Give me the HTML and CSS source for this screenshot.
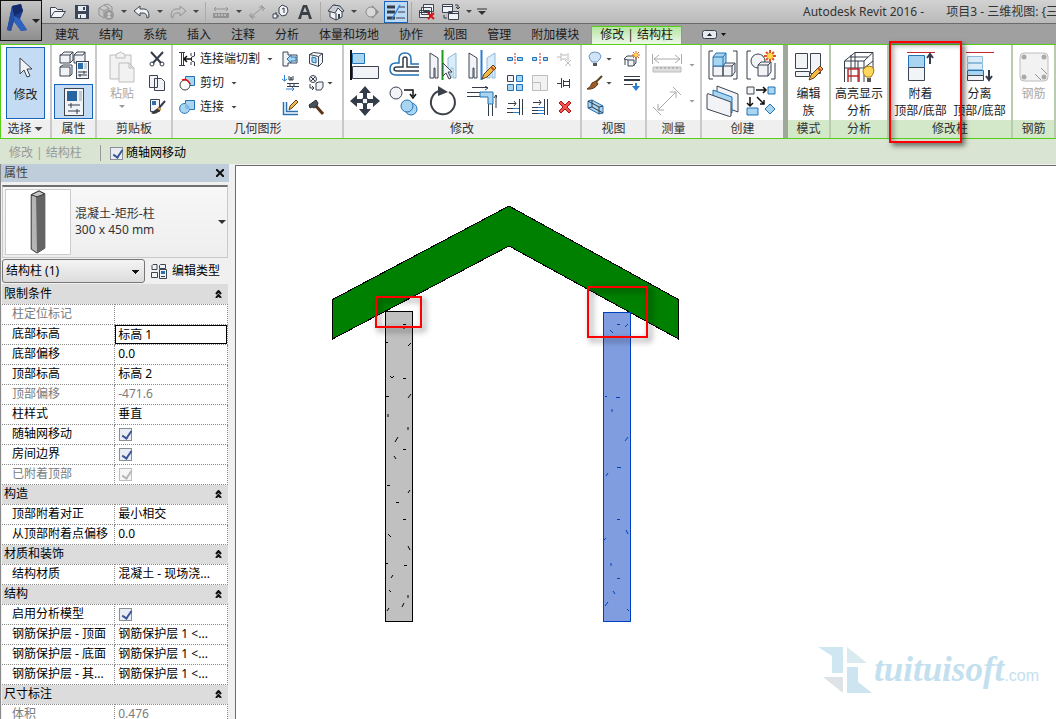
FILE: index.html
```html
<!DOCTYPE html>
<html lang="zh-CN">
<head>
    <meta charset="UTF-8">
    <meta name="viewport" content="width=device-width, initial-scale=1.0">
    <title>Autodesk Revit 2016</title>
    <link rel="stylesheet" href="styles.css">
</head>
<body>
    <header class="top">
        <button class="app-btn" aria-label="应用程序菜单">
            <svg width="40" height="38" viewBox="0 0 40 38">
                <path d="M11 4L20 2L22 9L19 17L26 28L20 29L13 19L10 29L6 28Z" fill="#1d3f8f"/>
                <path d="M11 4L20 2L22 9L13 14Z" fill="#15296b"/>
                <path d="M13 14L19 17L26 28L20 29L13 20Z" fill="#2f62bd"/>
                <path d="M11 4L13 14L10 29L6 28Z" fill="#2850a5"/>
                <path d="M31 17h8l-4 4z" fill="#222"/>
            </svg>
        </button>
        <div class="title-bar">
            <div class="qat">
                <button aria-label="打开"><svg width="18" height="16" viewBox="0 0 18 16"><path class="wh" d="M1.500 13.500V3.500h5l2 2h5v2M1.500 13.500l4-6h11l-4 6z"/></svg></button>
                <button aria-label="保存"><svg width="16" height="16" viewBox="0 0 16 16"><path d="M1 1h13l1 1v13H1z" fill="#3c4657"/><path d="M4 2h8v5H4zM4 10h8v4H4z" fill="#e8edf4"/><path d="M9 3h2v3H9zM6 11h1v3H6z" fill="#3c4657"/></svg></button>
                <button aria-label="同步"><svg width="18" height="18" viewBox="0 0 18 18"><path class="gr" d="M2 5l5-3 5 3v7l-5 3-5-3zM2 5l5 3 5-3M7 8v7M7 2l4-1 4 3v4"/><circle cx="12" cy="12" r="5" fill="#999"/><path d="M12 9v6M10 11h4M10 14h4" stroke="#ddd"/></svg></button>
                <span class="drop"></span>
                <button aria-label="放弃"><svg width="18" height="16" viewBox="0 0 18 16"><path class="wh" d="M1 7l6-5v3h4q5 0 5 8l-2 1q0-5-4-5H7v3z"/></svg></button>
                <span class="drop"></span>
                <button aria-label="重做"><svg width="18" height="16" viewBox="0 0 18 16"><path class="gr" d="M17 7l-6-5v3H7q-5 0-5 8l2 1q0-5 4-5h3v3z"/></svg></button>
                <span class="drop"></span>
                <span class="sep"></span>
                <button aria-label="测量"><svg width="18" height="16" viewBox="0 0 18 16"><path class="gr" d="M2 5h14M4 3L2 5l2 2M14 3l2 2-2 2"/><path d="M1 9h16v5H1z" fill="#939393"/><path d="M4 10v2M7 10v2M10 10v2M13 10v2" stroke="#ddd"/></svg></button>
                <span class="drop"></span>
                <button aria-label="对齐尺寸标注"><svg width="18" height="16" viewBox="0 0 18 16"><path class="gr" d="M3 13L15 3M1 11l4 4M13 1l4 4M3 9v4h4M11 3h4v4"/></svg></button>
                <button aria-label="标记"><svg width="18" height="16" viewBox="0 0 18 16"><path class="dk" d="M7 12H4M4 8v4"/><path class="wh" d="M1 10h4v4H1zM10 1l5 2 1 4-2 4-4 1-3-3V4z"/><path class="dk" d="M10 5l2-1v5"/></svg></button>
                <button aria-label="文字"><svg width="16" height="16" viewBox="0 0 16 16"><path d="M1 15L6 1h4l5 14h-3l-1-4H5l-1 4zM6 8h4L8 3z" fill="#3b3f46"/></svg></button>
                <span class="sep"></span>
                <button aria-label="三维视图"><svg width="18" height="18" viewBox="0 0 18 18"><path class="wh" d="M3 8v6l6 3 6-3V8L12 3 7 2z"/><path d="M1 8l5-6 7 1 4 5-2 1-4-4-3 5z" fill="#c9ced6" stroke="#3c4452"/><path class="dk" d="M9 10v7"/><path d="M11 11h2v4l-2 1z" fill="#3c4452"/></svg></button>
                <span class="drop"></span>
                <button aria-label="剖面"><svg width="16" height="16" viewBox="0 0 16 16"><path d="M8 1v14l7-7z" fill="#8b8b8b"/><circle cx="7" cy="8" r="5" fill="#d8d8d8" stroke="#8b8b8b"/></svg></button>
                <button class="on" aria-label="细线"><svg width="20" height="16" viewBox="0 0 20 16"><path d="M1 3h8M1 8h8M1 14h8" stroke="#343c4a" stroke-width="3"/><path d="M12 3h7M12 8h7M10 14h9" stroke="#343c4a"/><path d="M6 15L14 1" stroke="#2f86dc" stroke-width="1.500"/></svg></button>
                <span class="sep"></span>
                <button aria-label="关闭隐藏窗口"><svg width="18" height="18" viewBox="0 0 18 18"><path class="wh" d="M5.500 1.500h10v7h-10zM3.500 4.500h10v7h-10zM1.500 7.500h10v7h-10z"/><path class="dk" d="M1 9.500h11"/><path d="M10 10l6 6M16 10l-6 6" stroke="#d31616" stroke-width="2"/></svg></button>
                <button aria-label="切换窗口"><svg width="18" height="18" viewBox="0 0 18 18"><path class="wh" d="M.500 1.500h10v8H.500zM6.500 8.500h10v8h-10z"/><path class="dk" d="M1 3.500h10M7 10.500h10M13 2h3v4M14 4l2 2 2-2M2 12v3h3"/></svg></button>
                <span class="drop"></span>
                <button class="qat-more" aria-label="自定义快速访问工具栏"><svg width="10" height="8" viewBox="0 0 10 8"><path d="M0 1h10" stroke="#333"/><path d="M1 3h8l-4 4z" fill="#333"/></svg></button>
            </div>
            <div class="title"><span>Autodesk Revit 2016 -</span><span>项目3 - 三维视图: {三</span></div>
        </div>
        <nav class="tabs">
            <a href="#">建筑</a>
            <a href="#">结构</a>
            <a href="#">系统</a>
            <a href="#">插入</a>
            <a href="#">注释</a>
            <a href="#">分析</a>
            <a href="#">体量和场地</a>
            <a href="#">协作</a>
            <a href="#">视图</a>
            <a href="#">管理</a>
            <a href="#">附加模块</a>
            <a href="#" class="active">修改 | 结构柱</a>
            <button class="minimize" aria-label="最小化功能区">
                <svg width="24" height="10" viewBox="0 0 24 10"><rect x=".5" y=".5" width="14" height="8" rx="2" fill="#e9e9f2" stroke="#39404d"/><path d="M5 6h5L7.500 3z" fill="#222"/><path d="M19 3h5l-2.500 3z" fill="#111"/></svg>
            </button>
        </nav>
    </header>

    <section class="ribbon">
        <div class="panel p-select">
            <div class="panel-body">
                <button class="big on">
                    <svg width="16" height="24" viewBox="0 0 16 24"><path class="wh" d="M2 2v16l4-4 3 7 3-1-3-7h5z"/></svg>
                    <span>修改</span>
                </button>
            </div>
            <div class="panel-name">选择<span class="drop"></span></div>
        </div>

        <div class="panel p-props">
            <div class="panel-body stack">
                <button class="tile" aria-label="类型属性"><svg width="30" height="30" viewBox="0 0 30 30"><path class="wh" d="M2 5l3-3h9v8l-3 3H1V5zM1 5h10v8M11 5l3-3M15 5l3-3h8v9l-3 2h-8zM15 5h9l2-3M1 17l3-2h9v9l-2 2H1zM1 17h10v9"/><rect class="wh" x="17.500" y="11.500" width="12" height="17"/><path d="M19 13h5v6h-5z" fill="#2a6fae"/><path d="M25 13h3v6h-3z" fill="#c8d0d8"/><path class="dk" d="M19 22h9M19 25h9M25 21v3M21 24v3"/></svg></button>
                <button class="tile on" aria-label="属性"><svg width="24" height="30" viewBox="0 0 24 30"><rect class="wh" x="2.500" y="1.500" width="19" height="27"/><path d="M5 4h10v10H5z" fill="#2765a0"/><path d="M17 4h3v10h-3z" fill="#c2cad2"/><path class="dk" d="M6 18h12M6 24h12M9 16v5M15 22v5"/></svg></button>
            </div>
            <div class="panel-name">属性</div>
        </div>

        <div class="panel p-clip">
            <div class="panel-body">
                <button class="big off" disabled>
                    <svg width="30" height="32" viewBox="0 0 30 32"><path class="pale" d="M3 4h21v24H3z"/><path class="pale" d="M9 5q0-3 3-3 1-2 3 0 3 0 3 3v2H9zM12 12h10l5 5v14H12zM22 12v5h5"/></svg>
                    <span>粘贴</span><i class="drop"></i>
                </button>
                <div class="small-col">
                    <button aria-label="剪切"><svg width="16" height="16" viewBox="0 0 16 16"><path d="M2 1l10 11M14 1L4 12" stroke="#343c4a" stroke-width="2"/><circle class="dk" cx="3" cy="13" r="2"/><circle class="dk" cx="13" cy="13" r="2"/></svg></button>
                    <button aria-label="复制"><svg width="16" height="16" viewBox="0 0 16 16"><path class="wh" d="M.500.500h8v12h-8zM5.500 3.500h7l3 3v9h-10z"/></svg></button>
                    <button aria-label="匹配类型"><svg width="18" height="16" viewBox="0 0 18 16"><path class="wh" d="M1.500.500h9v12h-9z"/><path d="M3 2h4v4H3z" fill="#2a6fae"/><path d="M16 2l-6 7" stroke="#343c4a" stroke-width="2"/><path d="M10 8l-8 6q5 3 10-4z" fill="#3b3b3b"/><path d="M9 9l3 2" stroke="#d89a3c" stroke-width="2"/></svg></button>
                </div>
            </div>
            <div class="panel-name">剪贴板</div>
        </div>

        <div class="panel p-geom">
            <div class="panel-body">
                <div class="small-col wide">
                    <button><svg width="16" height="16" viewBox="0 0 16 16"><path class="dk" d="M0 1.500h6M0 14.500h6M2.500 2v12M4.500 2v12M15.500 1v4l-3 1v4l3 1v4M12 2v3M12 11v3"/><path d="M5 8h8M8 5L5 8l3 3" stroke="#111" fill="none" stroke-width="1.500"/></svg>连接端切割<i class="drop"></i></button>
                    <button><svg width="16" height="16" viewBox="0 0 16 16"><path class="bl" d="M6.500 1.500h9v9h-9z"/><circle cx="6" cy="10" r="5" fill="#fff" stroke="#444"/><path d="M3 5q5-2 8 4" fill="none" stroke="#e01010" stroke-width="1.500"/></svg>剪切<i class="drop"></i></button>
                    <button><svg width="16" height="16" viewBox="0 0 16 16"><path class="bl" d="M6.500 1.500h9v9h-5a5 5 0 1 1-4-6z"/><path d="M6 5a5 5 0 0 1 5 5H6.500z" fill="#7dbbe6"/></svg>连接<i class="drop"></i></button>
                </div>
                <div class="small-col">
                    <button aria-label="连接端切割工具"><svg width="16" height="16" viewBox="0 0 16 16"><path class="wh" d="M1 1h5v3h9v8H6v3H1z"/><path class="bl" d="M5 8l4-4v2h5v4H9v2z"/></svg></button>
                    <button aria-label="墙连接"><svg width="18" height="16" viewBox="0 0 18 16"><path d="M2.500 0v6M0 4l2.500 2L5 4M4 14h8M10 12l2 2-2 2" stroke="#2a7fd0" fill="none"/><path class="dk" d="M7 1v4h2V2v3h2V1M5 8.500h12M5 11.500h12M8 9v2M12 9v2"/></svg></button>
                    <button aria-label="拆分面"><svg width="17" height="17" viewBox="0 0 17 17"><path d="M1.500 3v12.500H16M4.500 3v9.500H16" stroke="#2a6fae" fill="none" stroke-width="1.500"/><path d="M7 11l1-4 6-6 2 2-6 6z" fill="#f4b93e" stroke="#5b4121"/></svg></button>
                </div>
                <div class="small-col">
                    <button aria-label="洞口"><svg width="16" height="16" viewBox="0 0 16 16"><path class="wh" d="M1.500 3.500l9 2 4-3v9l-4 4-9-3zM10.500 5.500v10M1.500 3.500l4-2 9 1"/><path class="bl" d="M4 6l4 1v5l-4-1z"/></svg></button>
                    <button aria-label="填色"><svg width="16" height="16" viewBox="0 0 16 16"><circle class="wh" cx="5" cy="4" r="3.500"/><path class="dk" d="M3 2l4 4M7 2L3 6M2 9v4h4M4 11l2 2-2 2"/><path class="wh" d="M8 8l3-1h4v5l-2 3H8z"/></svg><i class="drop"></i></button>
                    <button aria-label="拆除"><svg width="17" height="16" viewBox="0 0 17 16"><path d="M7 6l8 9" stroke="#5b3519" stroke-width="3"/><path d="M1 6l7-5 2 3-1 3-3 2-2-1-2 1z" fill="#4a5059" stroke="#2b3038"/></svg></button>
                </div>
            </div>
            <div class="panel-name">几何图形</div>
        </div>

        <div class="panel p-modify">
            <div class="panel-body">
                <div class="big-grid four">
                    <button aria-label="对齐"><svg width="30" height="30" viewBox="0 0 30 30"><path d="M1 0v30" stroke="#111" stroke-width="2"/><path class="bl" d="M2.500 3.500h12v10h-12z"/><path class="wh" d="M2.500 16.500h26v12h-26z"/></svg></button>
                    <button aria-label="偏移"><svg width="30" height="30" viewBox="0 0 30 30"><path d="M30 25H7q-6 0-6-6t6-6h3V9q0-6 6-6t6 6v5h8" stroke="#2272b5" fill="none" stroke-width="1.500"/><path d="M30 21H8q-3 0-3-2t3-2h6V9q0-2 2-2t2 2v8h12" stroke="#343c4a" fill="none" stroke-width="1.500"/></svg></button>
                    <button aria-label="镜像 - 拾取轴"><svg width="30" height="30" viewBox="0 0 30 30"><path class="wh" d="M2 3l8 5v20H7V18H6v10H2z"/><path class="pb" d="M28 3l-8 5v20h3V18h2v10h3z"/><path d="M14.500 0v30" stroke="#1b9c1b" stroke-width="2"/><path class="wh" d="M15 13v13l3-3 3 6 2-1-3-6h4z"/></svg></button>
                    <button aria-label="镜像 - 绘制轴"><svg width="30" height="30" viewBox="0 0 30 30"><path class="wh" d="M2 3l8 5v20H7V18H6v10H2z"/><path class="pb" d="M28 3l-8 5v20h3V18h2v10h3z"/><path d="M14.500 0v30" stroke="#2a7fd0" stroke-width="2"/><path d="M15 29l2-5 9-9 3 3-9 9z" fill="#f4b93e" stroke="#5b4121"/><path d="M24 17l3 3" stroke="#c94e2f" stroke-width="2"/></svg></button>
                    <button aria-label="移动"><svg width="30" height="30" viewBox="0 0 30 30"><path d="M15 0l6 7h-4v5h-4V7H9zM15 30l-6-7h4v-5h4v5h4zM0 15l7-6v4h5v4H7v4zM30 15l-7 6v-4h-5v-4h5V9z" fill="#343c4a"/><path class="wh" d="M12.500 12.500h5v5h-5z"/></svg></button>
                    <button aria-label="复制图元"><svg width="30" height="30" viewBox="0 0 30 30"><circle class="wh" cx="7" cy="7" r="6"/><path d="M15 4h9v6M21 8l3 4 3-4" stroke="#111" fill="none" stroke-width="1.500"/><circle class="bl" cx="22" cy="23" r="6"/><circle class="bl" cx="18" cy="20" r="6"/></svg></button>
                    <button aria-label="旋转"><svg width="30" height="30" viewBox="0 0 30 30"><path d="M11 5a12 12 0 1 0 10 1" stroke="#3c4149" fill="none" stroke-width="2"/><path d="M10 0l10 6-10 4z" fill="#3c4149"/></svg></button>
                    <button aria-label="修剪/延伸为角"><svg width="30" height="30" viewBox="0 0 30 30"><path d="M0 6.500h14M0 10.500h14M21.500 16v14M25.500 16v14M5 1.500h16M18 0l3 2-3 2M29 22V9M27 12l2-3 1 3" stroke="#343c4a" fill="none"/><path class="bl" d="M13 6h13v12h-5v-7h-8z"/></svg></button>
                </div>
                <div class="small-grid">
                    <button aria-label="拆分图元"><svg width="16" height="16" viewBox="0 0 16 16"><path class="bl" d="M.500 6.500h5v3h-5zM10.500 6.500h5v3h-5z"/><path d="M8 2v12" stroke="#d22" stroke-dasharray="2 1"/></svg></button>
                    <button aria-label="用间隙拆分"><svg width="16" height="16" viewBox="0 0 16 16"><path class="bl" d="M.500 6.500h4v3h-4zM11.500 6.500h4v3h-4z"/><path d="M8 2v12" stroke="#d22" stroke-dasharray="2 1"/></svg></button>
                    <button aria-label="解锁"><svg width="16" height="16" viewBox="0 0 16 16"><path d="M0 6h4M4 2v8M4 4h6M4 8h6M11 2v8M8 9l6 6M14 9l-6 6" fill="none" stroke="#bbb"/></svg></button>
                    <button aria-label="阵列"><svg width="16" height="16" viewBox="0 0 16 16"><path class="wh" d="M.500.500h6v6h-6z"/><path class="bl" d="M9.500.500h6v6h-6zM.500 9.500h6v6h-6zM9.500 9.500h6v6h-6z"/></svg></button>
                    <button aria-label="缩放"><svg width="16" height="16" viewBox="0 0 16 16"><path class="pale" d="M.500.500h15v15H.500zM.500 7.500h8v8h-8z"/></svg></button>
                    <button aria-label="锁定"><svg width="16" height="16" viewBox="0 0 16 16"><path class="dk" d="M0 8.500h4M4.500 3v10M6.500 5v7M7 6.500h5M7 10.500h5M12.500 4v9"/></svg></button>
                    <button aria-label="修剪/延伸单个图元"><svg width="16" height="16" viewBox="0 0 16 16"><path class="dk" d="M1 4.500h8M7 2l2 2.500L7 7M0 9.500h7M0 13.500h7M12.500 0v16M15.500 0v16"/><path d="M6 9.500h6M6 13.500h6" stroke="#2a7fd0"/></svg></button>
                    <button aria-label="修剪/延伸多个图元"><svg width="16" height="16" viewBox="0 0 16 16"><path class="dk" d="M1 3.500h8M7 1l2 2.500L7 6M0 8.500h7M0 11.500h7M0 14.500h7M12.500 0v16M15.500 0v16"/><path d="M6 8.500h6M6 11.500h6M6 14.500h6" stroke="#2a7fd0"/></svg></button>
                    <button aria-label="删除"><svg width="16" height="16" viewBox="0 0 16 16"><path d="M2 4l2-2 4 4 4-4 2 2-4 4 4 4-2 2-4-4-4 4-2-2 4-4z" fill="#ef5350" stroke="#b01313"/></svg></button>
                </div>
            </div>
            <div class="panel-name">修改</div>
        </div>

        <div class="panel p-view">
            <div class="panel-body">
                <div class="small-col">
                    <button aria-label="隐藏"><svg width="16" height="16" viewBox="0 0 16 16"><path d="M5 11q-3-3-3-6 1-4 6-4t6 4q0 3-4 6z" fill="#cfe4f8" stroke="#6c96c4"/><path d="M6 12h4v3H6z" fill="#555"/></svg><i class="drop"></i></button>
                    <button aria-label="替换"><svg width="16" height="16" viewBox="0 0 16 16"><path d="M15 1L8 8" stroke="#5b4121" stroke-width="2"/><path d="M9 6l2 3q-4 6-11 5 4-2 5-6z" fill="#9c5a24" stroke="#5b3519"/></svg><i class="drop"></i></button>
                    <button aria-label="选择框"><svg width="17" height="16" viewBox="0 0 17 16"><path class="bl" d="M1 2l4-1 11 6v7l-4 1L1 9z"/><path class="dk" d="M5 1v7l11 6M1 9l4-1M1 2l11 6v7M12 8l4-1"/></svg></button>
                </div>
                <div class="small-col">
                    <button aria-label="置换图元"><svg width="18" height="16" viewBox="0 0 18 16"><path class="wh" d="M1 8l3-3h9v7l-3 3H5V9zM5 9h6v6M2 8v6"/><path d="M13 0v8M9 4h8M10 1l6 6M16 1l-6 6" stroke="#e0531d"/><circle cx="13" cy="4" r="2" fill="#ffd84a"/></svg></button>
                    <button aria-label="线处理"><svg width="18" height="16" viewBox="0 0 18 16"><path d="M1 1.500h16M1 9.500h9" stroke="#343c4a"/><path d="M1 5h16" stroke="#343c4a" stroke-width="2"/><path d="M12 8v3h-3l4 5 4-5h-3V8z" fill="#2a7fd0"/></svg></button>
                </div>
            </div>
            <div class="panel-name">视图</div>
        </div>

        <div class="panel p-measure">
            <div class="panel-body stack">
                <button class="split" aria-label="测量"><svg width="30" height="30" viewBox="0 0 30 30"><path d="M2 9h26M7 5L2 9l5 4M23 5l5 4-5 4M.500 4v10M29.500 4v10" fill="none" stroke="#aaa"/><path d="M1 17h28v5H1z" fill="#ddd" stroke="#bbb"/><path d="M5 17v2M9 17v2M13 17v2M17 17v2M21 17v2M25 17v2" stroke="#999"/></svg><i class="drop"></i></button>
                <button class="split" aria-label="尺寸标注"><svg width="30" height="30" viewBox="0 0 30 30"><path d="M6 24L24 6M1 21l8 8M21 1l8 8M6 18v6h6M18 6h6v6" fill="none" stroke="#aaa"/></svg><i class="drop"></i></button>
            </div>
            <div class="panel-name">测量</div>
        </div>

        <div class="panel p-create">
            <div class="panel-body">
                <div class="big-grid two">
                    <button aria-label="创建部件"><svg width="30" height="30" viewBox="0 0 30 30"><path class="dk" d="M5 1H1v28h4M25 1h4v28h-4"/><path class="wh" d="M5 16h10v10H5zM15 16l2-3h10v9l-3 4h-9zM15 16h9v10M24 16l3-3"/><path class="bl" d="M5 7l3-4h10v9l-3 4H5zM5 7h10v9M15 7l3-4"/></svg></button>
                    <button aria-label="创建组"><svg width="30" height="30" viewBox="0 0 30 30"><path class="dk" d="M5 1H1v28h4M25 29h4V13"/><circle class="wh" cx="12" cy="11" r="7"/><path class="wh" d="M12 15l3-3h10v10l-3 4H12zM12 15h10v11M22 15l3-3"/><path d="M24 0v12M18 6h12M20 2l8 8M28 2l-8 8" stroke="#e0531d" stroke-width="2"/><circle cx="24" cy="6" r="3" fill="#ffd84a"/></svg></button>
                    <button aria-label="创建零件"><svg width="34" height="32" viewBox="0 0 34 32"><path class="wh" d="M11 1l21 8v18l-21-8z"/><path class="bl" d="M7 5l19 7v16L7 21z"/><path class="wh" d="M1 10q0-2 2-1l22 8v14q-1 1-3 0L1 24z"/></svg></button>
                    <button aria-label="创建类似"><svg width="30" height="30" viewBox="0 0 30 30"><path class="wh" d="M1 1h7v7H1z"/><path class="bl" d="M22 1h7v7h-7zM1 22h11v7H1zM24 18l5 5-5 5-5-5z"/><path d="M10 4h10M17 1l3 3-3 3M4 11v9M1 17l3 3 3-3M11 11l7 7M18 14v4h-4" stroke="#111" fill="none" stroke-width="1.500"/></svg></button>
                </div>
            </div>
            <div class="panel-name">创建</div>
        </div>

        <div class="panel context p-mode">
            <div class="panel-body">
                <button class="big"><svg width="30" height="30" viewBox="0 0 30 30"><path class="wh" d="M1.500 1.500h12v15h-12zM16.500 1.500h10v20h-10zM1.500 19.500h14v5h-14z"/><path d="M15 28l2-5 9-9 3 3-9 9z" fill="#f4b93e" stroke="#5b4121"/><path d="M24 16l3 3" stroke="#c94e2f" stroke-width="2"/></svg><span>编辑<br>族</span></button>
            </div>
            <div class="panel-name">模式</div>
        </div>
        <div class="panel context p-analyze">
            <div class="panel-body">
                <button class="big"><svg width="32" height="32" viewBox="0 0 32 32"><path class="dk" d="M1.500 31V10L12 1.500h18L21 10H1.500M21 10v21M30 1.500V22M8 31V4M15 31V10M12 1.500V17M1.500 17H21l9-7M7 6h18"/><path d="M5 31V18h11v13M5 25h11" stroke="#c0282d" fill="none" stroke-width="1.500"/><path d="M23 26q-4-4-3-7 2-4 6-4t5 4q0 3-3 7z" fill="#ffd75c" stroke="#a97912"/><path d="M24 27h4v4h-4z" fill="#555"/></svg><span>高亮显示<br>分析</span></button>
            </div>
            <div class="panel-name">分析</div>
        </div>
        <div class="panel context p-column">
            <div class="panel-body">
                <button class="big"><svg width="30" height="32" viewBox="0 0 30 32"><path d="M1 1.500h28" stroke="#c0282d"/><path class="bl" d="M2.500 4.500h16v12h-16z"/><path class="wh" d="M2.500 16.500h16v13h-16z"/><path d="M24 13V4M21 7l3-4 3 4" stroke="#343c4a" fill="none" stroke-width="2"/></svg><span>附着<br>顶部/底部</span></button>
                <button class="big"><svg width="30" height="32" viewBox="0 0 30 32"><path d="M1 1.500h28" stroke="#c0282d"/><path class="pb" d="M2.500 5.500h15v6h-15zM2.500 12.500h15v6h-15z"/><path class="bl" d="M2.500 19.500h16v5h-16z"/><path class="wh" d="M2.500 24.500h16v5h-16z"/><path d="M24 19v9M21 25l3 4 3-4" stroke="#343c4a" fill="none" stroke-width="2"/></svg><span>分离<br>顶部/底部</span></button>
            </div>
            <div class="panel-name">修改柱</div>
            <div class="mark"></div>
        </div>
        <div class="panel context p-rebar">
            <div class="panel-body">
                <button class="big off" disabled><svg width="30" height="30" viewBox="0 0 30 30"><rect class="pale" x="1" y="1" width="28" height="28" rx="4"/><path class="gr" d="M16 22l6 6M22 16l6 6"/><circle cx="5" cy="5" r="2.500" fill="#aaa"/><circle cx="25" cy="5" r="2.500" fill="#aaa"/><circle cx="5" cy="25" r="2.500" fill="#aaa"/><circle cx="25" cy="25" r="2.500" fill="#aaa"/></svg><span>钢筋</span></button>
            </div>
            <div class="panel-name">钢筋</div>
        </div>
    </section>

    <div class="options">
        <span class="options-name">修改 | 结构柱</span>
        <label class="options-check"><input type="checkbox" checked>随轴网移动</label>
    </div>

    <main class="work">
        <aside class="palette">
            <div class="palette-title">
                <span>属性</span>
                <button aria-label="关闭"><svg width="8" height="8" viewBox="0 0 8 8"><path d="M0 0l8 8M8 0L0 8" stroke="#111" stroke-width="2"/></svg></button>
            </div>
            <button class="type">
                <svg class="type-thumb" width="66" height="66" viewBox="0 0 66 66"><path d="M26 5l8-4 6 3v56l-8 5-6-4z" fill="#b5b5b5" stroke="#333"/><path d="M31 7l9-3v56l-8 5z" fill="#646464"/><path d="M26 5l8-4 6 3-8 3z" fill="#c9c9c9" stroke="#333"/></svg>
                <span class="type-name">混凝土-矩形-柱<br>300 x 450 mm</span>
                <svg width="8" height="4" viewBox="0 0 8 4"><path d="M0 0h8L4 4z" fill="#333"/></svg>
            </button>
            <div class="filter">
                <select aria-label="图元类别"><option>结构柱 (1)</option></select>
                <button class="edit-type"><svg width="16" height="16" viewBox="0 0 16 16"><path class="wh" d="M1 2.500l1-1h4v5H1zM8.500 2.500l1-1h5v4h-6zM.500 9.500h6v5h-6z"/><path class="wh" d="M8.500 6.500h7v9h-7z"/><path d="M10 8h4v3h-4z" fill="#2a6fae"/><path class="dk" d="M10 13.500h4"/></svg>编辑类型</button>
            </div>
            <table class="props">
                <tr class="group"><th colspan="2"><div>限制条件<button aria-label="折叠"><svg width="7" height="8" viewBox="0 0 7 8"><path class="chev" d="M1 4l2.500-3L6 4M1 8l2.500-3L6 8"/></svg></button></div></th></tr>
                <tr class="dim"><th>柱定位标记</th><td></td></tr>
                <tr><th><label for="base">底部标高</label></th><td class="edit"><input type="text" id="base" value="标高 1"></td></tr>
                <tr><th>底部偏移</th><td>0.0</td></tr>
                <tr><th>顶部标高</th><td>标高 2</td></tr>
                <tr class="dim"><th>顶部偏移</th><td>-471.6</td></tr>
                <tr><th>柱样式</th><td>垂直</td></tr>
                <tr><th><label for="grid">随轴网移动</label></th><td><input type="checkbox" id="grid" checked></td></tr>
                <tr><th><label for="room">房间边界</label></th><td><input type="checkbox" id="room" checked></td></tr>
                <tr class="dim"><th><label for="attached">已附着顶部</label></th><td><input type="checkbox" id="attached" checked disabled></td></tr>
                <tr class="group"><th colspan="2"><div>构造<button aria-label="折叠"><svg width="7" height="8" viewBox="0 0 7 8"><path class="chev" d="M1 4l2.500-3L6 4M1 8l2.500-3L6 8"/></svg></button></div></th></tr>
                <tr><th>顶部附着对正</th><td>最小相交</td></tr>
                <tr><th>从顶部附着点偏移</th><td>0.0</td></tr>
                <tr class="group"><th colspan="2"><div>材质和装饰<button aria-label="折叠"><svg width="7" height="8" viewBox="0 0 7 8"><path class="chev" d="M1 4l2.500-3L6 4M1 8l2.500-3L6 8"/></svg></button></div></th></tr>
                <tr><th>结构材质</th><td>混凝土 - 现场浇...</td></tr>
                <tr class="group"><th colspan="2"><div>结构<button aria-label="折叠"><svg width="7" height="8" viewBox="0 0 7 8"><path class="chev" d="M1 4l2.500-3L6 4M1 8l2.500-3L6 8"/></svg></button></div></th></tr>
                <tr><th><label for="model">启用分析模型</label></th><td><input type="checkbox" id="model" checked></td></tr>
                <tr><th>钢筋保护层 - 顶面</th><td>钢筋保护层 1 &lt;...</td></tr>
                <tr><th>钢筋保护层 - 底面</th><td>钢筋保护层 1 &lt;...</td></tr>
                <tr><th>钢筋保护层 - 其...</th><td>钢筋保护层 1 &lt;...</td></tr>
                <tr class="group"><th colspan="2"><div>尺寸标注<button aria-label="折叠"><svg width="7" height="8" viewBox="0 0 7 8"><path class="chev" d="M1 4l2.500-3L6 4M1 8l2.500-3L6 8"/></svg></button></div></th></tr>
                <tr class="dim"><th>体积</th><td>0.476</td></tr>
            </table>
        </aside>

        <section class="canvas">
            <svg class="drawing" role="img" aria-label="三维视图">
                <defs>
                    <filter id="shade" x="-20%" y="-20%" width="150%" height="150%"><feDropShadow dx="3" dy="3" stdDeviation="3" flood-color="#000" flood-opacity=".6"/></filter>
                </defs>
                <!-- 屋顶 -->
                <path d="M96.500 133.500L273 40L442.500 133.500V173L273 80L96.500 173Z" fill="#008000" stroke="#000" shape-rendering="crispEdges"/>
                <!-- 柱 -->
                <rect x="149.500" y="145.500" width="27" height="310" fill="#c0c0c0" stroke="#000"/>
                <path d="M167 158.500h3M168 161v2M150 176.500h2M172 180l3-3M154 210l2 2 2-2M167 212.500h3M150 230.500h3M172 232l3-4M152 248v3M159 276l3-5M172 261v3M158 290l2 3M167 283.500h3M151 319.500h3M172 327l2-3M160 336.500h3M167 353.500h3M152 368l3 3M172 380l2 4M150 397.500h2M155 412l2-3M168 399.500h3M153 424l2 2M151 445l2-3M166 441l2-4M172 429v3" stroke="#000" fill="none"/>
                <rect x="367.500" y="146.500" width="27" height="309" fill="#809ddf" stroke="#003fc0"/>
                <path d="M381 158.500h3M374 164l3 3M389 161l3-3M369 230.500h2M380 231.500h4M376 243v3M389 275l3-4M381 301.500h4M370 310l2-3M381 353.500h3M390 364l2 4M368 374l2-2M375 397v3M381 412.500h3M391 443l2 2M377 425l2 3M369 440l3-4" stroke="#003fc0" fill="none"/>
                <g fill="none" stroke="#f00" stroke-width="2" filter="url(#shade)">
                    <rect x="140" y="131" width="45" height="30"/>
                    <rect x="352" y="121" width="59" height="50"/>
                </g>
            </svg>
            <div class="watermark">
                <svg width="54" height="46" viewBox="0 0 54 46"><path d="M0 0h25v26H14V9z" fill="#cfe7f1"/><path d="M29 0l20 16H29z" fill="#d9ebf1"/><path d="M5 30h20v16z" fill="#dde3e6"/><path d="M29 20h11v15l14 11H29z" fill="#cce5f1"/></svg>
                <span class="wm-name">tuituisoft</span><span class="wm-com">.com</span>
            </div>
        </section>
    </main>
</body>
</html>
```
FILE: styles.css
```css
* {
    box-sizing: border-box;
}

body {
    margin: 0;
    height: 100vh;
    display: flex;
    flex-direction: column;
    overflow: hidden;
    background: #f0f0f0;
    color: #1c1c1c;
    font-family: "Noto Sans", "Noto Sans CJK SC", sans-serif;
    font-size: 12px;
    line-height: 16px;
}

button, input, select {
    font: inherit;
    color: inherit;
}

button {
    display: flex;
    align-items: center;
    justify-content: center;
    padding: 0;
    border: 0;
    background: none;
}

svg {
    display: block;
    flex: none;
}

/* icon strokes */
.wh { fill: #f1f3f6; stroke: #3c4452; }
.dk { fill: none; stroke: #343c4a; }
.bl { fill: #a9d5f1; stroke: #2272b5; }
.pb { fill: #d9ecf8; stroke: #8dbbdc; }
.gr { fill: none; stroke: #939393; }
.pale { fill: #f2f2f2; stroke: #bdbdbd; }
.chev { fill: none; stroke: #111; stroke-width: 2; }

.drop {
    flex: none;
    width: 12px;
    height: 3px;
    background: #444;
    clip-path: polygon(3px 0, 9px 0, 6px 3px);
}

/* title bar and tabs */
.top {
    flex: none;
    display: grid;
    grid-template: 24px 20px / 42px 1fr;
    background: #a0a0a0;
}

.app-btn {
    grid-row: 1 / 3;
    margin-bottom: 3px;
    border: 1px solid #111;
    background: linear-gradient(#c4c4c4, #8e8e8e);
}

.title-bar {
    display: flex;
    min-width: 0;
    background: linear-gradient(#d2d2d2, #b9b9b9);
    border-bottom: 1px solid #6b6b6b;
}

.qat {
    flex: none;
    display: flex;
    align-items: center;
    padding-left: 4px;
}

.qat button {
    width: 24px;
    height: 22px;
}

.qat .on {
    background: #bcd9f5;
    border: 1px solid #1763bd;
}

.qat .qat-more {
    width: 14px;
}

.sep {
    width: 1px;
    height: 20px;
    margin: 0 3px;
    background: #aaa;
}

.title {
    flex: 1;
    min-width: 0;
    display: flex;
    align-items: center;
    gap: 22px;
    margin-left: 314px;
    white-space: nowrap;
    color: #333;
}

.tabs {
    display: flex;
    align-items: center;
    gap: 20px;
    padding: 2px 0 0 13px;
    white-space: nowrap;
}

.tabs a {
    color: #1c1c1c;
    text-decoration: none;
}

.tabs .active {
    align-self: stretch;
    margin-left: -8px;
    padding: 0 8px;
    border: 1px solid #55cf17;
    border-bottom: 0;
    background: linear-gradient(#b5e6a0, #eef7ea);
}

/* ribbon */
.ribbon {
    flex: none;
    display: flex;
    height: 95px;
    border: 1px solid #55cf17;
    border-right: 0;
    background: #fff;
}

.panel {
    position: relative;
    flex: none;
    display: flex;
    flex-direction: column;
    border-right: 2px solid #c9c9c9;
}

.panel-body {
    flex: 1;
    display: flex;
    padding: 2px 5px 1px;
}

.panel-name {
    height: 18px;
    display: flex;
    align-items: center;
    justify-content: center;
    background: #efefef;
    color: #333;
}

.context {
    border-color: #b9ccb0;
}

.context .panel-name {
    background: #d3e7c9;
}

.p-select { width: 51px; }
.p-props { width: 45px; }
.p-clip { width: 76px; }
.p-geom { width: 171px; }
.p-modify { width: 238px; }
.p-view { width: 65px; }
.p-measure { width: 55px; }
.p-create { width: 86px; border-right: 5px solid #9fa99b; }
.p-mode { width: 43px; }
.p-analyze { width: 58px; }
.p-column { width: 124px; }
.p-rebar { flex: 1; min-width: 43px; }

.big {
    flex: 1;
    flex-direction: column;
    justify-content: flex-start;
    padding-top: 4px;
    line-height: 17px;
    white-space: nowrap;
}

.big svg {
    height: 32px;
    margin-bottom: 2px;
}

.big.off {
    color: #a9a9a9;
}

.on {
    background: #c3dcf4;
    border: 1px solid #1763bd;
}

.p-select .panel-name .drop {
    height: 4px;
    clip-path: polygon(3px 0, 11px 0, 7px 4px);
}

.p-props .panel-body {
    padding: 2px 2px 1px;
}

.stack {
    flex-direction: column;
    justify-content: space-between;
}

.tile {
    height: 35px;
}

.small-col {
    display: grid;
    grid-template-rows: repeat(3, 24px);
    justify-items: start;
}

.small-col button {
    justify-content: flex-start;
    white-space: nowrap;
}

.p-clip .big {
    flex: none;
    width: 40px;
    margin-right: 7px;
}

.off .drop {
    margin-top: 3px;
}

.p-geom .panel-body {
    gap: 8px;
    padding-left: 6px;
}

.wide {
    width: 95px;
}

.wide svg {
    margin-right: 5px;
}

.wide .drop {
    margin-left: 4px;
}

.p-modify .panel-body {
    gap: 6px;
    padding-left: 1px;
}

.big-grid {
    display: grid;
    grid-template-rows: 36px 36px;
}

.four {
    grid-template-columns: repeat(4, 39px);
}

.two {
    grid-template-columns: repeat(2, 38px);
}

.small-grid {
    display: grid;
    grid-template: repeat(3, 24px) / repeat(3, 16px);
    column-gap: 9px;
}

.p-view .panel-body {
    gap: 8px;
}

.p-create .panel-body,
.p-mode .panel-body,
.p-analyze .panel-body,
.p-column .panel-body,
.p-rebar .panel-body {
    padding: 2px 2px 1px;
}

.split {
    height: 36px;
    justify-content: flex-start;
}

.split .drop,
.off .drop {
    background: #999;
}

.split .drop {
    margin-left: 4px;
}

.mark {
    position: absolute;
    top: -4px;
    left: 0;
    width: 73px;
    height: 102px;
    border: 2px solid #f00;
    box-shadow: 3px 3px 5px rgba(0, 0, 0, 0.5), inset 3px 3px 5px rgba(0, 0, 0, 0.3);
    z-index: 1;
}

/* options bar */
.options {
    flex: none;
    display: flex;
    align-items: center;
    height: 25px;
    padding: 5px 9px 2px;
    background: #d9e5d2;
}

.options-name {
    width: 92px;
    border-right: 1px solid #999;
    color: #999;
}

.options-check {
    display: flex;
    align-items: center;
    gap: 3px;
    margin-left: 9px;
    color: #000;
}

input[type="checkbox"] {
    appearance: none;
    display: block;
    width: 13px;
    height: 13px;
    margin: 0;
    border: 1px solid #8a8f96;
    background: #e9edf3;
}

input[type="checkbox"]:checked::after {
    content: "";
    display: block;
    width: 4px;
    height: 8px;
    margin-left: 4px;
    border: solid #3a5497;
    border-width: 0 2px 2px 0;
    transform: rotate(35deg);
}

input[type="checkbox"]:disabled {
    border-color: #c0c0c0;
    background: #f5f5f5;
}

input[type="checkbox"]:disabled::after {
    border-color: #b5b5b5;
}

/* work area */
.work {
    flex: 1;
    min-height: 0;
    display: flex;
}

.palette {
    flex: none;
    width: 235px;
    padding: 0 7px 0 1px;
    border-left: 1px solid #8a8a8a;
    overflow: hidden;
}

.palette-title {
    display: flex;
    align-items: center;
    justify-content: space-between;
    height: 18px;
    margin: 0 -1px 3px;
    padding: 0 5px 0 3px;
    background: #bfcddb;
    color: #444;
}

.type {
    width: 100%;
    height: 73px;
    justify-content: flex-start;
    padding: 0 1px 0 2px;
    border: 1px solid #c9c9c9;
    border-top: 2px solid #6f6f6f;
    background: linear-gradient(#f7f7f7, #eee);
    text-align: left;
}

.type-thumb {
    border: 1px solid #ccc;
    background: #fff;
}

.type-name {
    flex: 1;
    margin-left: 4px;
    color: #333;
}

.filter {
    display: flex;
    align-items: center;
    gap: 6px;
    height: 26px;
}

.filter select {
    appearance: none;
    width: 143px;
    height: 24px;
    padding: 0 3px;
    border: 1px solid #777;
    border-radius: 3px;
    background:
        linear-gradient(to bottom left, #111 50%, transparent 50%) right 8px top 10px / 4px 4px no-repeat,
        linear-gradient(to bottom right, #111 50%, transparent 50%) right 4px top 10px / 4px 4px no-repeat,
        linear-gradient(#f4f4f4, #dcdcdc);
    color: #000;
}

.edit-type {
    gap: 5px;
    color: #000;
}

.props {
    width: 100%;
    table-layout: fixed;
    border-collapse: collapse;
    background: #fff;
    color: #000;
}

.props th,
.props td {
    height: 20px;
    padding: 0 0 0 3px;
    border: 1px dotted #8c8c8c;
    font-weight: normal;
    line-height: 16px;
    text-align: left;
    white-space: nowrap;
    overflow: hidden;
}

.props th {
    padding-left: 10px;
    border-left: 0;
}

.props .group th {
    padding: 0 6px 0 2px;
    border: 0;
    background: #dcdcdc;
}

.group div {
    display: flex;
    align-items: center;
    justify-content: space-between;
}

.dim {
    color: #7b7b7b;
}

.props td input[type="checkbox"] {
    margin-left: 1px;
}

.props .edit {
    padding: 0;
}

.edit input {
    display: block;
    width: 100%;
    height: 19px;
    padding: 0 2px;
    border: 1px solid #000;
    background: #fff;
}

.canvas {
    position: relative;
    flex: 1;
    min-width: 0;
    margin-top: 1px;
    border: solid #6b6b6b;
    border-width: 1px 0 0 1px;
    background: #fff;
}

.drawing {
    width: 100%;
    height: 100%;
}

.watermark {
    position: absolute;
    right: 17px;
    bottom: 26px;
    display: flex;
    align-items: baseline;
    color: #c3e0ef;
}

.watermark svg {
    align-self: center;
}

.wm-name {
    margin-left: 2px;
    font: italic bold 35px/46px "Liberation Serif", serif;
}

.wm-com {
    font: 16px/24px "Liberation Sans", sans-serif;
}
```
